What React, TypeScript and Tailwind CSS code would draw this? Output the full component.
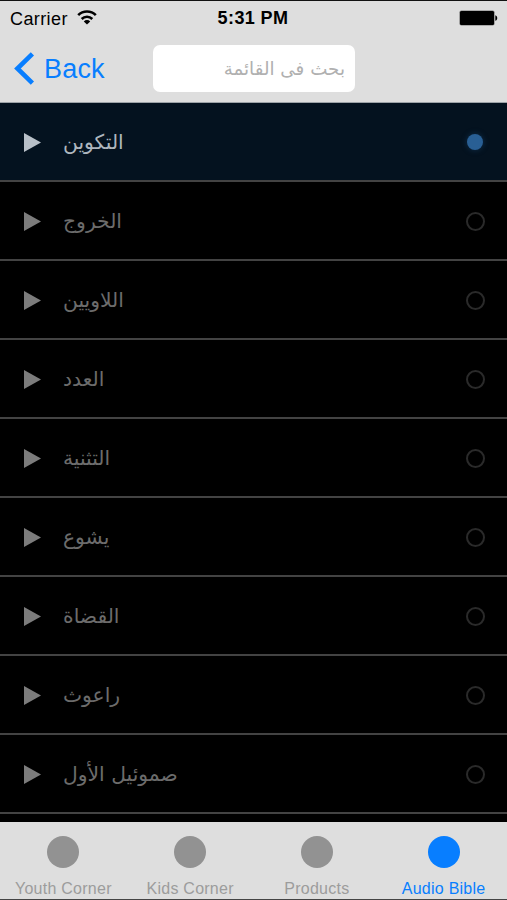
const books = ["التكوين", "الخروج", "اللاويين", "العدد", "التثنية", "يشوع", "القضاة", "راعوث", "صموئيل الأول"];

const tabs = ["Youth Corner", "Kids Corner", "Products", "Audio Bible"];

function StatusBar() {
  return (
    <div className="grid h-[35px] grid-cols-3 items-center pl-[10px] pr-[11px] text-[18px] tracking-[0.4px] text-black">
      <div className="flex items-center gap-[9px] pt-px">
        <span>Carrier</span>
        <svg className="mt-[-4px] h-[15px] w-[20px]" viewBox="0 0 20 15" fill="none" stroke="#000" strokeWidth="2.6">
          <path d="M1.2 5.2a12.4 12.4 0 0 1 17.6 0" />
          <path d="M4.7 9a7.5 7.5 0 0 1 10.6 0" />
          <path d="M10 14.6 6.8 11.4a4.5 4.5 0 0 1 6.4 0Z" fill="#000" stroke="none" />
        </svg>
      </div>
      <span className="text-center font-bold">5:31 PM</span>
      <svg className="-mr-[2px] mt-[-2px] h-[16px] w-[39px] justify-self-end" viewBox="0 0 39 16">
        <rect x="0.4" y="0.4" width="35.2" height="15.2" rx="2" fill="#777" />
        <rect x="1" y="1" width="34" height="14" rx="1.5" />
        <path d="M36.3 5.2c2.6.8 2.6 4.8 0 5.6Z" />
      </svg>
    </div>
  );
}

export default function App() {
  return (
    <div className="flex h-[900px] w-[507px] flex-col overflow-hidden bg-black font-['Liberation_Sans',sans-serif]">
      <header className="h-[103px] shrink-0 border-b border-b-[#9da3a8] border-t border-t-[#111] bg-[#dedede]">
        <StatusBar />
        <div className="flex items-center pl-[14px] pt-[8px]">
          <button className="flex w-[139px] items-center gap-[9px] text-[27px] leading-[48px] tracking-[0.2px] text-[#087eff]">
            <svg className="h-[33px] w-[21px]" viewBox="0 0 21 33" fill="none" stroke="currentColor" strokeWidth="4.6">
              <path d="M18.4 1.8 3.4 16.5l15 14.7" />
            </svg>
            <span className="pt-px">Back</span>
          </button>
          <input
            dir="rtl"
            placeholder="بحث فى القائمة"
            className="h-[47px] w-[202px] rounded-[7px] bg-white px-[10px] font-['DejaVu_Sans',sans-serif] text-[18.3px] placeholder:text-[#b0b0b0]"
          />
        </div>
      </header>

      <main className="h-[719px] shrink-0 overflow-hidden">
        {books.map((book, i) => (
          <div
            key={book}
            className={`flex h-[79px] items-center border-b-2 border-[#434343] pl-[24px] pr-[22px] pt-px ${i === 0 ? "bg-[#04121f] text-[#b8c0c8]" : "bg-black text-[#7c7c7c]"}`}
          >
            <svg className="h-[19px] w-[17px]" viewBox="0 0 17 19" fill="currentColor">
              <path d="M0 0 17 9.5 0 19Z" />
            </svg>
            <span
              dir="rtl"
              className={`ml-[22px] font-['DejaVu_Sans',sans-serif] text-[20.3px] ${i === 0 ? "text-[#aeb6be]" : "text-[#6c6c6c]"}`}
            >
              {book}
            </span>
            {i === 0 ? (
              <span className="ml-auto mr-[2px] size-[16px] rounded-full bg-[#295f94] shadow-[0_0_5px_1px_#0c2740]" />
            ) : (
              <span className="ml-auto size-[19px] rounded-full border-2 border-[#2a2a2a]" />
            )}
          </div>
        ))}
      </main>

      <nav className="grid h-[78px] shrink-0 grid-cols-4 border-b border-[#444] bg-[#dedede]">
        {tabs.map((tab) => (
          <div
            key={tab}
            className={`flex flex-col items-center pt-[14px] text-[16px] ${tab === "Audio Bible" ? "text-[#087eff]" : "text-[#929292]"}`}
          >
            <span className="size-[32px] rounded-full bg-current" />
            <span
              className={`mt-[11px] whitespace-nowrap leading-[20px] tracking-[0.25px] ${tab === "Audio Bible" ? "" : "text-[#9c9c9c]"}`}
            >
              {tab}
            </span>
          </div>
        ))}
      </nav>
    </div>
  );
}
